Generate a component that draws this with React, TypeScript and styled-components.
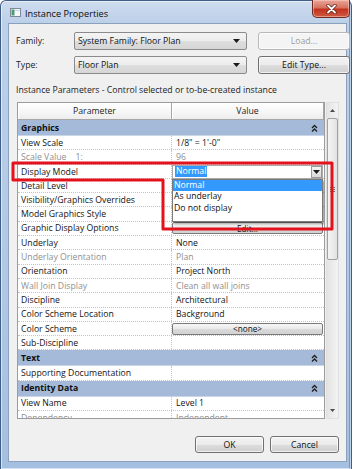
import React from "react";
import styled, { createGlobalStyle } from "styled-components";

const GlobalStyle = createGlobalStyle`
  html, body { margin: 0; padding: 0; background: #ffffff; }
  body {
    width: 355px; height: 469px; overflow: hidden;
    font-family: "Open Sans", "Liberation Sans", sans-serif;
    font-size: 8.7px; font-weight: 500; color: #141414;
  }
  * { box-sizing: border-box; }
`;

const Page = styled.div`
  position: relative;
  width: 355px;
  height: 469px;
`;

const Window = styled.div`
  width: 352px;
  height: 469px;
  border: 1px solid #3f5f86;
  border-bottom: none;
  border-radius: 6px 6px 0 0;
  background: linear-gradient(180deg, #cfdcee 0px, #bcd0e9 22px, #b0c8e5 60%, #a5bfe0 100%);
  box-shadow: inset 0 0 0 1px rgba(255, 255, 255, 0.55), inset -2px 0 0 #6f9bd4;
  display: flex;
  flex-direction: column;
  padding: 0 4px 7px 7px;
`;

const TitleBar = styled.div`
  height: 22px;
  display: flex;
  align-items: flex-start;
  flex-shrink: 0;
`;

const AppIcon = styled.svg`
  margin: 7px 0 0 2px;
  flex-shrink: 0;
`;

const Title = styled.span`
  margin: 6px 0 0 4px;
  font-size: 9.2px;
  font-weight: 400;
  color: #0c0c0c;
`;

const CloseButton = styled.div`
  margin-left: auto;
  margin-right: -3px;
  margin-top: -1px;
  width: 38px;
  height: 18px;
  border: 1px solid #6d2b24;
  border-top: none;
  border-radius: 0 0 5px 5px;
  background: linear-gradient(180deg, #e9a79b 0%, #d7735f 45%, #c2331f 55%, #cf5a44 100%);
  box-shadow: inset 0 0 0 1px rgba(255, 210, 200, 0.5);
  display: flex;
  align-items: center;
  justify-content: center;
`;

const Content = styled.div`
  flex: 1;
  background: #f0f0f0;
  border: 1px solid #8aa0bb;
  display: flex;
  flex-direction: column;
  padding: 8px 7px 8px 7px;
`;

const Form = styled.div`
  display: grid;
  grid-template-columns: 47px 173px 92px;
  grid-auto-rows: 18px;
  column-gap: 11px;
  row-gap: 6px;
  align-items: center;
`;

const FieldLabel = styled.span`
  color: #1b1b1b;
`;

const Combo = styled.div`
  height: 18px;
  border: 1px solid #8b8b8b;
  border-radius: 2px;
  background: linear-gradient(180deg, #f4f4f4 0%, #ececec 50%, #dedede 51%, #d6d6d6 100%);
  display: flex;
  align-items: center;
  padding: 0 6px 0 3px;
  color: #111;
`;

const ComboText = styled.span`
  flex: 1;
`;

const Caret = styled.svg`
  flex-shrink: 0;
`;

const PushButton = styled.div<{ $disabled?: boolean }>`
  height: 18px;
  border: 1px solid ${(p) => (p.$disabled ? "#b7b7b7" : "#707070")};
  border-radius: 3px;
  background: ${(p) =>
    p.$disabled
      ? "#f4f4f4"
      : "linear-gradient(180deg, #f3f3f3 0%, #ebebeb 50%, #dddddd 51%, #cfcfcf 100%)"};
  box-shadow: inset 0 0 0 1px rgba(255, 255, 255, 0.7);
  color: ${(p) => (p.$disabled ? "#9c9c9c" : "#111")};
  display: flex;
  align-items: center;
  justify-content: center;
`;

const Caption = styled.div`
  margin-top: 10px;
  line-height: 12px;
  height: 12px;
  color: #1b1b1b;
`;

const TableArea = styled.div`
  margin-top: 6px;
  margin-left: 1px;
  height: 317px;
  display: flex;
  gap: 1px;
  flex-shrink: 0;
`;

const Table = styled.div`
  position: relative;
  width: 308px;
  height: 317px;
  border: 1px solid #9c9c9c;
  background: #ffffff;
  overflow: hidden;
  display: flex;
  flex-direction: column;
`;

const HeaderRow = styled.div`
  display: grid;
  grid-template-columns: 154px 1fr;
  height: 17px;
  flex-shrink: 0;
`;

const HeaderCell = styled.div`
  border-right: 1px solid #a6a6a6;
  border-bottom: 1px solid #a6a6a6;
  background: linear-gradient(180deg, #ffffff 0%, #f7f7f7 50%, #ededed 100%);
  box-shadow: inset 1px 1px 0 #ffffff;
  display: flex;
  align-items: center;
  justify-content: center;
  color: #1b1b1b;
`;

const GroupRow = styled.div`
  height: 16px;
  flex-shrink: 0;
  background: #a4bad8;
  border-bottom: 1px solid #c9d6e8;
  display: flex;
  align-items: center;
  padding: 0 6px 0 3px;
  font-weight: 700;
  color: #0f0f0f;
`;

const GroupLabel = styled.span`
  flex: 1;
`;

const Row = styled.div`
  height: 14.3px;
  flex-shrink: 0;
  display: grid;
  grid-template-columns: 154px 1fr;
  border-bottom: 1px dotted #c4c4c4;
`;

const ParamCell = styled.div<{ $dim?: boolean }>`
  border-right: 1px dotted #c4c4c4;
  padding-left: 3px;
  display: flex;
  align-items: center;
  white-space: pre;
  color: ${(p) => (p.$dim ? "#8f8f8f" : "#141414")};
`;

const ValueCell = styled.div<{ $dim?: boolean }>`
  position: relative;
  padding-left: 4px;
  display: flex;
  align-items: center;
  color: ${(p) => (p.$dim ? "#8f8f8f" : "#141414")};
`;

const CellButton = styled.div`
  flex: 1;
  height: 12px;
  margin-left: -4px;
  margin-right: 1px;
  border: 1px solid #7a7a7a;
  border-radius: 2px;
  background: linear-gradient(180deg, #f6f6f6 0%, #e9e9e9 50%, #dadada 51%, #d2d2d2 100%);
  display: flex;
  align-items: center;
  justify-content: center;
  font-size: 8.2px;
  color: #111;
`;

const CellCombo = styled.div`
  flex: 1;
  height: 14px;
  margin-left: -4px;
  margin-right: 1px;
  border: 1px solid #a9a9a9;
  background: #ffffff;
  display: flex;
  align-items: center;
  padding: 0 0 0 2px;
`;

const Selected = styled.span`
  background: #3399ff;
  color: #ffffff;
  padding: 0 1px;
  line-height: 11px;
`;

const ComboArrow = styled.div`
  margin-left: auto;
  width: 11px;
  height: 12px;
  border: 1px solid #9a9a9a;
  background: linear-gradient(180deg, #f4f4f4, #d9d9d9);
  display: flex;
  align-items: center;
  justify-content: center;
`;

const DropList = styled.div`
  position: absolute;
  top: 100%;
  left: 0;
  right: 1px;
  height: 43px;
  z-index: 5;
  background: #ffffff;
  border: 1px solid #7a7a7a;
  box-shadow: 2px 2px 2px rgba(0, 0, 0, 0.35);
  display: flex;
  flex-direction: column;
`;

const DropItem = styled.div<{ $active?: boolean }>`
  height: 11.5px;
  line-height: 11.5px;
  padding-left: 1px;
  background: ${(p) => (p.$active ? "#3399ff" : "transparent")};
  color: ${(p) => (p.$active ? "#ffffff" : "#111")};
`;

const ScrollBar = styled.div`
  width: 13px;
  height: 317px;
  background: linear-gradient(90deg, #e4e4e4, #f3f3f3);
  border: 1px solid #e0e0e0;
  display: flex;
  flex-direction: column;
`;

const ScrollArrow = styled.div`
  height: 15px;
  flex-shrink: 0;
  display: flex;
  align-items: center;
  justify-content: center;
`;

const Thumb = styled.div`
  height: 142px;
  border: 1px solid #a0a0a0;
  border-radius: 2px;
  background: linear-gradient(90deg, #f4f4f4, #e2e2e2);
  display: flex;
  align-items: center;
  justify-content: center;
  flex-shrink: 0;
`;

const Track = styled.div`
  flex: 1;
`;

const Footer = styled.div`
  margin-top: auto;
  display: flex;
  justify-content: flex-end;
  gap: 6px;
`;

const DialogButton = styled(PushButton)`
  width: 69px;
  height: 17px;
`;

const Annotation = styled.svg`
  position: absolute;
  left: 0;
  top: 0;
  pointer-events: none;
  z-index: 10;
`;

type RowDef =
  | { kind: "group"; label: string }
  | { kind: "text"; label: string; value?: string; dim?: boolean }
  | { kind: "button"; label: string; value: string }
  | { kind: "combo"; label: string };

const rows: RowDef[] = [
  { kind: "group", label: "Graphics" },
  { kind: "text", label: "View Scale", value: "1/8\" = 1'-0\"" },
  { kind: "text", label: "Scale Value    1:", value: "96", dim: true },
  { kind: "combo", label: "Display Model" },
  { kind: "text", label: "Detail Level" },
  { kind: "text", label: "Visibility/Graphics Overrides" },
  { kind: "text", label: "Model Graphics Style" },
  { kind: "button", label: "Graphic Display Options", value: "Edit..." },
  { kind: "text", label: "Underlay", value: "None" },
  { kind: "text", label: "Underlay Orientation", value: "Plan", dim: true },
  { kind: "text", label: "Orientation", value: "Project North" },
  { kind: "text", label: "Wall Join Display", value: "Clean all wall joins", dim: true },
  { kind: "text", label: "Discipline", value: "Architectural" },
  { kind: "text", label: "Color Scheme Location", value: "Background" },
  { kind: "button", label: "Color Scheme", value: "<none>" },
  { kind: "text", label: "Sub-Discipline" },
  { kind: "group", label: "Text" },
  { kind: "text", label: "Supporting Documentation" },
  { kind: "group", label: "Identity Data" },
  { kind: "text", label: "View Name", value: "Level 1" },
  { kind: "text", label: "Dependency", value: "Independent", dim: true },
];

const DownCaret = () => (
  <Caret width="7" height="4" viewBox="0 0 7 4">
    <path d="M0 0 H7 L3.5 4 Z" fill="#1a1a1a" />
  </Caret>
);

const Collapse = () => (
  <svg width="7" height="8" viewBox="0 0 7 8">
    <polyline points="1,4 3.5,1.5 6,4" fill="none" stroke="#1e1e1e" strokeWidth="1.3" />
    <polyline points="1,7.5 3.5,5 6,7.5" fill="none" stroke="#1e1e1e" strokeWidth="1.3" />
  </svg>
);

function renderRow(r: RowDef, i: number) {
  if (r.kind === "group") {
    return (
      <GroupRow key={i}>
        <GroupLabel>{r.label}</GroupLabel>
        <Collapse />
      </GroupRow>
    );
  }
  if (r.kind === "button") {
    return (
      <Row key={i}>
        <ParamCell>{r.label}</ParamCell>
        <ValueCell>
          <CellButton>{r.value}</CellButton>
        </ValueCell>
      </Row>
    );
  }
  if (r.kind === "combo") {
    return (
      <Row key={i}>
        <ParamCell>{r.label}</ParamCell>
        <ValueCell>
          <CellCombo>
            <Selected>Normal</Selected>
            <ComboArrow>
              <DownCaret />
            </ComboArrow>
          </CellCombo>
          <DropList>
            <DropItem $active>Normal</DropItem>
            <DropItem>As underlay</DropItem>
            <DropItem>Do not display</DropItem>
          </DropList>
        </ValueCell>
      </Row>
    );
  }
  return (
    <Row key={i}>
      <ParamCell $dim={r.dim}>{r.label}</ParamCell>
      <ValueCell $dim={r.dim}>{r.value ?? ""}</ValueCell>
    </Row>
  );
}

export default function App() {
  return (
    <Page>
      <GlobalStyle />
      <Window>
        <TitleBar>
          <AppIcon width="11" height="9" viewBox="0 0 11 9">
            <rect x="0.5" y="0.5" width="10" height="8" fill="#f4f7fa" stroke="#7d8a96" />
            <rect x="1.5" y="1.5" width="3" height="6" fill="#4a9a78" />
            <rect x="5" y="2" width="4.5" height="1" fill="#c5d3e0" />
          </AppIcon>
          <Title>Instance Properties</Title>
          <CloseButton>
            <svg width="11" height="10" viewBox="0 0 11 10">
              <path d="M2 1.5 L9 8.5 M9 1.5 L2 8.5" stroke="#5a1d16" strokeWidth="3.2" strokeLinecap="round" />
              <path d="M2 1.5 L9 8.5 M9 1.5 L2 8.5" stroke="#ffffff" strokeWidth="1.8" strokeLinecap="round" />
            </svg>
          </CloseButton>
        </TitleBar>
        <Content>
          <Form>
            <FieldLabel>Family:</FieldLabel>
            <Combo>
              <ComboText>System Family: Floor Plan</ComboText>
              <DownCaret />
            </Combo>
            <PushButton $disabled>Load...</PushButton>
            <FieldLabel>Type:</FieldLabel>
            <Combo>
              <ComboText>Floor Plan</ComboText>
              <DownCaret />
            </Combo>
            <PushButton>Edit Type...</PushButton>
          </Form>
          <Caption>Instance Parameters - Control selected or to-be-created instance</Caption>
          <TableArea>
            <Table>
              <HeaderRow>
                <HeaderCell>Parameter</HeaderCell>
                <HeaderCell>Value</HeaderCell>
              </HeaderRow>
              {rows.map(renderRow)}
            </Table>
            <ScrollBar>
              <ScrollArrow>
                <svg width="5" height="3" viewBox="0 0 5 3">
                  <path d="M0 3 L2.5 0 L5 3 Z" fill="#4a4a4a" />
                </svg>
              </ScrollArrow>
              <Thumb>
                <svg width="5" height="5" viewBox="0 0 5 5">
                  <path d="M0 0.5 H5 M0 2.5 H5 M0 4.5 H5" stroke="#6d6d6d" strokeWidth="1" />
                </svg>
              </Thumb>
              <Track />
              <ScrollArrow>
                <svg width="5" height="3" viewBox="0 0 5 3">
                  <path d="M0 0 L5 0 L2.5 3 Z" fill="#4a4a4a" />
                </svg>
              </ScrollArrow>
            </ScrollBar>
          </TableArea>
          <Footer>
            <DialogButton>OK</DialogButton>
            <DialogButton>Cancel</DialogButton>
          </Footer>
        </Content>
      </Window>
      <Annotation width="355" height="469" viewBox="0 0 355 469">
        <path
          d="M13 163 H332 V229 H163 V180 H13 Z"
          fill="none"
          stroke="#e3121c"
          strokeWidth="3"
          strokeLinejoin="round"
        />
      </Annotation>
    </Page>
  );
}
